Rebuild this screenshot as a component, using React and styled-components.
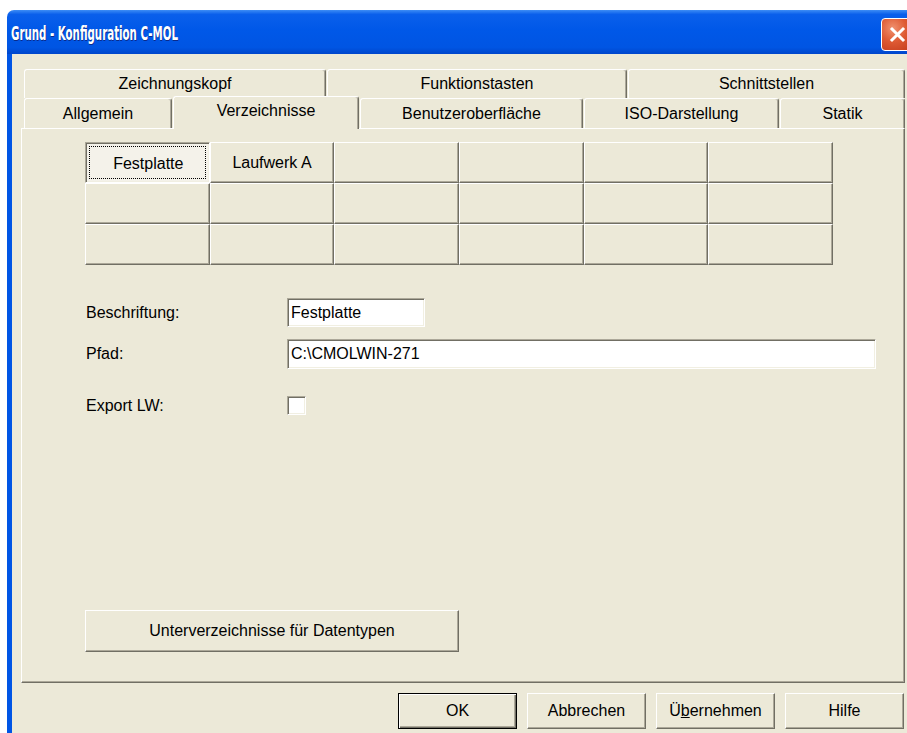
import React from 'react';
import styled, { createGlobalStyle, css } from 'styled-components';

const colors = {
  face: '#ECE9D8',
  shadow: '#ACA899',
  darkShadow: '#716F64',
  highlight: '#FFFFFF',
  light: '#F1EFE2',
  frame: '#0055E5',
};

const GlobalStyle = createGlobalStyle`
  html, body {
    margin: 0;
    background: #fff;
    overflow: hidden;
  }
  body {
    font-family: "Liberation Sans", Arial, sans-serif;
    font-size: 16px;
    color: #000;
  }
`;

// classic 3D edges
const raised = css`
  border-top: 1px solid ${colors.highlight};
  border-left: 1px solid ${colors.highlight};
  border-right: 1px solid ${colors.darkShadow};
  border-bottom: 1px solid ${colors.darkShadow};
  box-shadow: inset -1px -1px 0 ${colors.shadow};
`;

const sunken = css`
  border-top: 1px solid ${colors.shadow};
  border-left: 1px solid ${colors.shadow};
  border-right: 1px solid ${colors.highlight};
  border-bottom: 1px solid ${colors.highlight};
  box-shadow: inset 1px 1px 0 ${colors.darkShadow}, inset -1px -1px 0 ${colors.light};
`;

const Window = styled.div`
  width: 913px;
  margin: 10px 0 0 7px;
  display: flex;
  flex-direction: column;
`;

const TitleBar = styled.div`
  height: 44px;
  box-sizing: border-box;
  display: flex;
  align-items: center;
  justify-content: space-between;
  padding: 1px 6px 0 4px;
  border-radius: 7px 7px 0 0;
  background: linear-gradient(
    to bottom,
    #3D8DF5 0%,
    #0A5FEB 10%,
    #0058E8 45%,
    #0055E3 85%,
    #0046CB 100%
  );
`;

const Title = styled.span`
  font-family: "DejaVu Sans Condensed", "Liberation Sans", sans-serif;
  font-weight: bold;
  font-size: 20px;
  color: #fff;
  text-shadow: 1px 1px 0 #0A2A8A;
  transform: scaleX(0.57);
  transform-origin: left center;
  white-space: nowrap;
`;

const CloseButton = styled.div`
  width: 33px;
  height: 33px;
  box-sizing: border-box;
  margin-top: 3px;
  border: 1px solid #fff;
  border-radius: 4px;
  background: radial-gradient(circle at 35% 30%, #F0916F 0%, #DE5A33 45%, #C2391A 100%);
  display: flex;
  align-items: center;
  justify-content: center;
`;

const Body = styled.div`
  background: ${colors.face};
  border-left: 5px solid ${colors.frame};
  border-right: 5px solid ${colors.frame};
  padding: 15px 10px 12px 9px;
`;

const TabRow = styled.div`
  display: flex;
  align-items: flex-end;
  gap: 1px;
  height: ${(p) => p.$h}px;
  padding-left: 3px;
  position: relative;
  z-index: 1;
`;

const Tab = styled.div`
  width: ${(p) => p.$w}px;
  height: 100%;
  box-sizing: border-box;
  display: flex;
  align-items: center;
  justify-content: center;
  background: ${colors.face};
  border-top: 1px solid ${colors.highlight};
  border-left: 1px solid ${colors.highlight};
  border-right: 1px solid ${colors.darkShadow};
  box-shadow: inset -1px 0 0 ${colors.shadow};
  border-radius: 3px 3px 0 0;
  white-space: nowrap;

  ${(p) =>
    p.$active &&
    css`
      height: 33px;
      margin-bottom: -1px;
      padding-bottom: 5px;
    `}
`;

const Panel = styled.div`
  height: 555px;
  box-sizing: border-box;
  ${raised}
  display: flex;
  flex-direction: column;
  padding: 13px 20px 30px 63px;
`;

const DriveGrid = styled.div`
  display: grid;
  grid-template-columns: repeat(6, 1fr);
  grid-auto-rows: 41px;
  width: 748px;
`;

const DriveCell = styled.div`
  box-sizing: border-box;
  display: flex;
  align-items: center;
  justify-content: center;
  background: ${colors.face};
  ${raised}

  ${(p) =>
    p.$pressed &&
    css`
      ${sunken}
      background: #F4F2EA;
      padding: 2px 0 0 2px;
      outline: 1px dotted #000;
      outline-offset: -5px;
    `}
`;

const FieldRow = styled.div`
  display: flex;
  align-items: center;
  height: ${(p) => p.$h}px;
  margin-top: ${(p) => p.$top}px;
`;

const Label = styled.div`
  width: 202px;
  padding-left: 1px;
  box-sizing: border-box;
`;

const TextField = styled.div`
  width: ${(p) => p.$w}px;
  height: 100%;
  box-sizing: border-box;
  background: #fff;
  ${sunken}
  display: flex;
  align-items: center;
  padding-left: 3px;
`;

const CheckBox = styled.div`
  width: 19px;
  height: 19px;
  box-sizing: border-box;
  background: #fff;
  ${sunken}
`;

const WideButton = styled.div`
  margin-top: auto;
  width: 374px;
  height: 42px;
  box-sizing: border-box;
  display: flex;
  align-items: center;
  justify-content: center;
  ${raised}
`;

const ButtonBar = styled.div`
  display: flex;
  justify-content: flex-end;
  gap: 10px;
  margin-top: 10px;
  padding-right: 1px;
`;

const DialogButton = styled.div`
  width: 119px;
  height: 36px;
  box-sizing: border-box;
  display: flex;
  align-items: center;
  justify-content: center;
  ${raised}

  ${(p) =>
    p.$default &&
    css`
      border: 1px solid #000;
      box-shadow: inset 1px 1px 0 ${colors.highlight}, inset -1px -1px 0 ${colors.darkShadow},
        inset -2px -2px 0 ${colors.shadow};
    `}
`;

const backTabs = [
  { label: 'Zeichnungskopf', width: 302 },
  { label: 'Funktionstasten', width: 300 },
  { label: 'Schnittstellen', width: 277 },
];

const frontTabs = [
  { label: 'Allgemein', width: 148 },
  { label: 'Verzeichnisse', width: 186, active: true },
  { label: 'Benutzeroberfläche', width: 223 },
  { label: 'ISO-Darstellung', width: 195 },
  { label: 'Statik', width: 125 },
];

const drives = ['Festplatte', 'Laufwerk A'];

function App() {
  const cells = Array.from({ length: 18 }, (_, i) => drives[i] || '');

  return (
    <>
      <GlobalStyle />
      <Window>
        <TitleBar>
          <Title>Grund - Konfiguration C-MOL</Title>
          <CloseButton>
            <svg width="19" height="19" viewBox="0 0 19 19">
              <path d="M4 4 L15 15 M15 4 L4 15" stroke="#fff" strokeWidth="3" strokeLinecap="square" />
            </svg>
          </CloseButton>
        </TitleBar>

        <Body>
          <TabRow $h={29}>
            {backTabs.map((t) => (
              <Tab key={t.label} $w={t.width}>
                {t.label}
              </Tab>
            ))}
          </TabRow>
          <TabRow $h={30}>
            {frontTabs.map((t) => (
              <Tab key={t.label} $w={t.width} $active={t.active}>
                {t.label}
              </Tab>
            ))}
          </TabRow>

          <Panel>
            <DriveGrid>
              {cells.map((name, i) => (
                <DriveCell key={i} $pressed={i === 0}>
                  {name}
                </DriveCell>
              ))}
            </DriveGrid>

            <FieldRow $h={29} $top={33}>
              <Label>Beschriftung:</Label>
              <TextField $w={138}>Festplatte</TextField>
            </FieldRow>
            <FieldRow $h={30} $top={12}>
              <Label>Pfad:</Label>
              <TextField $w={589}>C:\CMOLWIN-271</TextField>
            </FieldRow>
            <FieldRow $h={19} $top={27}>
              <Label>Export LW:</Label>
              <CheckBox />
            </FieldRow>

            <WideButton>Unterverzeichnisse für Datentypen</WideButton>
          </Panel>

          <ButtonBar>
            <DialogButton $default>OK</DialogButton>
            <DialogButton>Abbrechen</DialogButton>
            <DialogButton>
              Ü<u>b</u>ernehmen
            </DialogButton>
            <DialogButton>Hilfe</DialogButton>
          </ButtonBar>
        </Body>
      </Window>
    </>
  );
}

export default App;
